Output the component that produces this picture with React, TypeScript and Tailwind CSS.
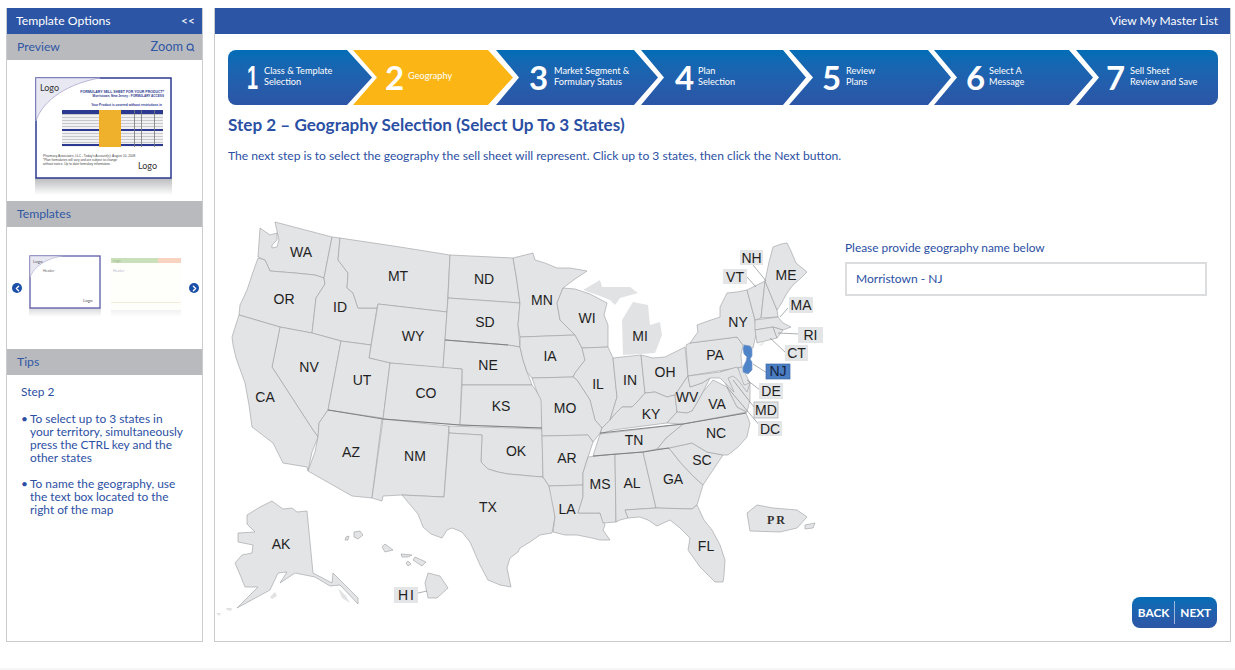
import { ChevronLeft, ChevronRight, Search } from 'lucide-react';

const steps = [
  { n: '1', l1: 'Class & Template', l2: 'Selection', cls: 'w-[144px] pl-[19px] rounded-l-lg [clip-path:polygon(0_0,119px_0,100%_50%,119px_100%,0_100%)]', numW: "w-[17px] inline-block origin-left scale-x-[0.6] font-['Liberation_Sans',Arial,sans-serif]" },
  { n: '2', l1: 'Geography', l2: '', cls: 'w-[160px] ml-[-19px] pl-[32px] [clip-path:polygon(0_0,135px_0,100%_50%,135px_100%,0_100%,24px_50%)]', numW: 'w-[23px]', active: true },
  { n: '3', l1: 'Market Segment &', l2: 'Formulary Status', cls: 'w-[162px] ml-[-17px] pl-[33px] [clip-path:polygon(0_0,138px_0,100%_50%,138px_100%,0_100%,23px_50%)]', numW: 'w-[25px]' },
  { n: '4', l1: 'Plan', l2: 'Selection', cls: 'w-[165px] ml-[-17px] pl-[34px] [clip-path:polygon(0_0,142px_0,100%_50%,142px_100%,0_100%,23px_50%)]', numW: 'w-[23px]' },
  { n: '5', l1: 'Review', l2: 'Plans', cls: 'w-[162px] ml-[-17px] pl-[33px] [clip-path:polygon(0_0,139px_0,100%_50%,139px_100%,0_100%,24px_50%)]', numW: 'w-[24px]' },
  { n: '6', l1: 'Select A', l2: 'Message', cls: 'w-[159px] ml-[-17px] pl-[32px] [clip-path:polygon(0_0,135px_0,100%_50%,135px_100%,0_100%,23px_50%)]', numW: 'w-[23px]' },
  { n: '7', l1: 'Sell Sheet', l2: 'Review and Save', cls: 'w-[142px] ml-[-17px] pl-[30px] rounded-r-lg [clip-path:polygon(0_0,100%_0,100%_100%,0_100%,23px_50%)]', numW: 'w-[24px]' },
];

const states = [
  // west
  '275,222 332,237 324,278 315,275 295,273 270,271 265,260 258,257 260,228 270,235 277,233 277,240 272,245 272,248 277,247 279,240',
  '258,258 265,260 270,271 295,273 315,275 324,278 325,284 316,298 312,333 280,327 239,315 240,305 247,290 253,272',
  '332,237 340,238 338,260 348,273 347,288 353,293 358,308 377,308 371,345 341,341 312,333 316,298 325,284 324,278',
  '340,238 400,247 450,255 447,312 378,304 377,308 358,308 353,293 347,288 348,273 338,260',
  '378,304 447,312 443,368 390,363 369,358',
  '450,255 513,258 516,275 520,303 448,298',
  '448,298 520,303 518,325 520,347 508,345 445,340',
  '445,340 508,345 520,347 523,360 527,372 532,385 462,385 462,369 443,368',
  '280,327 312,333 341,341 328,410 319,423 318,437 313,430 272,367',
  '239,315 280,327 272,367 313,430 318,437 312,452 308,471 307,467 283,463 273,443 252,427 249,405 245,383 236,358 233,345 232,337',
  '341,341 371,345 369,358 390,363 383,419 328,410',
  '390,363 462,369 460,425 383,419',
  '328,410 382,418 372,498 352,496 308,471 315,452 318,437 319,423',
  '383,419 449,426 444,497 402,495 383,496 382,501 372,498',
  '462,385 532,385 537,392 542,400 542,428 460,425',
  '449,426 542,429 543,477 530,476 520,475 508,474 498,472 488,469 481,462 482,435 449,433',
  '449,433 482,435 481,462 488,469 498,472 508,474 520,475 530,476 543,477 549,486 553,500 555,517 552,533 540,535 530,542 520,548 518,552 510,558 507,568 511,587 500,585 488,580 480,565 470,542 462,532 452,528 447,530 442,538 431,534 423,527 418,514 402,495 444,497',
  // midwest
  '513,258 533,253 535,260 545,263 557,268 570,268 587,271 575,279 563,288 557,303 560,320 568,328 575,335 520,337 518,325 520,303 516,275',
  '520,337 575,335 582,348 585,360 575,373 573,377 532,378 527,372 523,360 520,347',
  '563,288 575,289 590,294 607,303 604,315 608,325 608,347 582,348 575,335 568,328 560,320 557,303',
  '582,348 608,347 613,358 615,378 617,397 610,420 602,428 595,420 590,400 577,380 573,377 575,373 585,360',
  '613,358 641,355 645,393 639,400 632,407 622,407 615,414 610,420 617,397 615,378',
  '641,355 653,358 665,357 685,347 688,376 675,395 667,397 655,392 645,393',
  '532,378 573,377 577,380 590,400 595,420 602,428 600,433 593,442 588,435 542,436 541,400 537,392',
  '542,436 588,435 593,442 588,457 583,473 583,485 549,486 543,477',
  '549,486 583,485 583,497 578,513 600,513 605,525 603,530 610,540 600,540 592,538 577,535 565,535 553,532 555,517',
  // south
  '588,457 615,454 616,522 603,523 600,513 578,513 583,497 583,473',
  '615,454 643,452 656,508 625,510 628,518 620,520 616,522',
  '643,452 657,449 669,448 680,462 693,476 703,485 697,505 692,509 656,508',
  '625,510 656,508 692,509 697,505 704,520 712,530 720,545 725,560 724,575 723,582 715,582 700,567 688,550 690,538 680,528 670,520 657,526 648,520 640,517 628,518',
  '669,448 692,443 707,452 723,455 713,470 703,485 693,476 680,462',
  '657,449 666,438 683,424 746,413 750,423 747,437 738,447 728,455 723,455 707,452 692,443 669,448',
  '593,456 600,434 683,424 666,438 657,449 643,452 615,454',
  '602,428 610,420 615,414 622,407 632,407 639,400 645,393 655,392 667,397 675,395 677,412 667,423 613,430 600,434',
  '675,395 688,376 690,387 702,383 710,378 703,392 697,403 692,411 687,413 677,412',
  '667,423 677,412 687,413 692,411 697,403 703,392 713,380 727,387 737,407 747,412 683,424',
  // north east
  '720,372 737,367 750,383 750,400 747,412 737,407 727,387',
  '686,345 690,343 737,337 743,345 741,355 742,367 688,376',
  '688,376 720,372 737,367 745,378 750,383 747,392 738,380 733,376 728,378 734,392 720,378 710,378 702,383 690,387',
  '738,368 742,367 750,383 744,385',
  '690,343 737,337 743,345 753,348 756,335 755,320 747,290 737,292 727,293 720,307 720,317 708,321 697,325 698,332',
  '747,290 765,281 761,318 755,320',
  '765,281 777,310 778,317 761,318',
  '765,281 769,262 773,247 781,244 787,243 791,251 796,263 807,272 800,279 793,285 787,293 781,304 777,310',
  '755,320 778,317 783,323 791,327 783,330 773,327 755,330',
  '755,330 773,327 777,338 757,343',
  '773,327 783,330 777,338',
  // alaska, PR
  '247,515 260,507 272,501 283,509 292,508 297,512 307,511 313,573 332,583 333,573 345,585 358,598 358,604 340,585 330,586 315,577 295,573 280,583 287,572 278,573 270,590 237,608 258,587 245,587 241,577 235,563 242,555 252,553 253,545 238,542 238,533 255,532 247,524',
  '747,513 757,505 773,508 797,510 807,517 797,528 780,532 750,531',
  '805,525 815,523 813,528 805,529',
  // hawaii
  '428,573 440,576 448,588 437,598 428,598 425,583',
  '415,557 426,562 422,566 413,560',
  '385,544 393,550 385,552 382,547',
  '401,554 412,555 408,557 402,557',
  '408,561 411,564 408,566 406,563',
  '354,532 360,531 363,535 358,539 354,537',
  '346,537 349,536 348,540 345,540',
];

// no outline on these in the picture
const smudges = [
  '623,355 622,320 633,302 648,305 650,325 660,322 662,335 655,353 641,354',
  '583,290 600,280 602,287 630,287 638,293 620,298 615,305 610,300 600,296',
  '270,597 275,592 277,596 272,599', '338,588 346,596 350,603 342,598', '226,608 232,608 231,611 227,610', '216,613 221,613 219,616',
];

const darkLines = [
  '328,410 383,419 460,425 542,428',
  '600,433 683,424 746,413',
  '593,456 643,452 669,448',
  '445,340 508,345',
];

const leaders = [
  [753, 265, 766, 281], [747, 277, 756, 287], [788, 308, 780, 317], [800, 334, 778, 333],
  [785, 352, 770, 338], [767, 373, 753, 364], [760, 390, 747, 380], [754, 407, 733, 380],
  [761, 427, 727, 387], [418, 593, 427, 591],
];

const labels: [string, number, number][] = [
  ['WA', 301, 252], ['OR', 284, 299], ['ID', 340, 307], ['MT', 398, 276], ['WY', 413, 336], ['ND', 484, 279],
  ['SD', 485, 322], ['NE', 488, 365], ['NV', 309, 367], ['UT', 362, 380], ['CO', 426, 393], ['CA', 265, 397],
  ['AZ', 351, 452], ['NM', 415, 456], ['KS', 501, 406], ['OK', 516, 451], ['TX', 488, 507], ['MN', 542, 300],
  ['IA', 550, 356], ['WI', 587, 318], ['IL', 598, 384], ['MI', 640, 336], ['IN', 630, 380], ['OH', 665, 372],
  ['PA', 715, 355], ['NY', 738, 322], ['ME', 786, 275], ['KY', 651, 414], ['WV', 687, 397], ['VA', 717, 404],
  ['TN', 634, 440], ['NC', 716, 433], ['SC', 702, 460], ['GA', 673, 479], ['AL', 632, 483], ['MS', 600, 484],
  ['AR', 567, 458], ['LA', 567, 509], ['MO', 565, 408], ['FL', 706, 546], ['AK', 281, 544],
];

const boxed: [string, number, number, number, number][] = [
  ['NH', 740, 250, 23, 15], ['VT', 723, 269, 24, 15], ['MA', 789, 297, 24, 16], ['RI', 798, 327, 25, 16],
  ['CT', 785, 345, 23, 16], ['DE', 759, 383, 24, 16], ['MD', 754, 402, 24, 16], ['DC', 758, 421, 24, 15],
];

function UsaMap() {
  return (
    <svg viewBox="215 215 620 410" className="w-[620px] h-[410px] shrink-0 font-['Liberation_Sans',Arial,sans-serif]">
      {states.map((p, i) => (
        <polygon key={i} points={p} fill="#e3e4e6" stroke="#9a9c9f" strokeWidth="0.6" strokeLinejoin="round" />
      ))}
      {smudges.map((p, i) => (
        <polygon key={i} points={p} fill="#e1e2e4" />
      ))}
      {darkLines.map((p, i) => (
        <polyline key={i} points={p} fill="none" stroke="#77797c" strokeWidth="0.9" />
      ))}
      <polygon points="744,345 750,346 752,349 752,356 750,359 752,362 752,370 748,374 743,372 743,367 746,361 747,357 744,354 743,349" fill="#4f84c8" stroke="#7a9ccc" strokeWidth="0.7" />
      <polygon points="758,345 766,341 762,346" fill="#eceded" />
      {leaders.map(([x1, y1, x2, y2], i) => (
        <line key={i} x1={x1} y1={y1} x2={x2} y2={y2} stroke="#8b8d90" strokeWidth="0.7" />
      ))}
      {labels.map(([t, x, y]) => (
        <text key={t} x={x} y={y + 5} textAnchor="middle" fontSize="14" fill="#1f1f1f">{t}</text>
      ))}
      {boxed.map(([t, x, y, w, h]) => (
        <g key={t}>
          <rect x={x} y={y} width={w} height={h} fill="#e4e5e6" stroke={t === 'MD' ? '#a5a7aa' : 'none'} strokeWidth="0.7" />
          <text x={x + w / 2} y={y + h / 2 + 5} textAnchor="middle" fontSize="14" fill="#1f1f1f">{t}</text>
        </g>
      ))}
      <rect x="766" y="364" width="24" height="15" fill="#4a7dc2" stroke="#3b6aab" strokeWidth="0.7" />
      <text x="778" y="376" textAnchor="middle" fontSize="14" fill="#14233c">NJ</text>
      <rect x="394" y="587" width="24" height="16" fill="#e4e5e6" />
      <text x="407" y="600" textAnchor="middle" fontSize="14" letterSpacing="2" fill="#1f1f1f">HI</text>
      <text x="777" y="524" textAnchor="middle" fontSize="12" letterSpacing="2" fontFamily="'Liberation Serif',serif" fontWeight="700" fill="#333">PR</text>
    </svg>
  );
}

function PreviewThumb() {
  return (
    <svg viewBox="0 0 137 118" className="w-[137px] h-[118px] font-['Liberation_Sans',Arial,sans-serif]">
      <defs>
        <linearGradient id="refl" x1="0" y1="0" x2="0" y2="1">
          <stop offset="0" stopColor="#b9babd" />
          <stop offset="1" stopColor="#ffffff" />
        </linearGradient>
      </defs>
      <rect x="0" y="101" width="137" height="17" fill="url(#refl)" />
      <rect x="1" y="1" width="135" height="100" fill="#fff" stroke="#2b3990" strokeWidth="1.5" />
      <path d="M1 1 H65 C35 6 8 22 1 44 Z" fill="#e8e8f2" stroke="#a9a7cf" strokeWidth="0.8" />
      <text x="5" y="14" fontSize="9" fontFamily="Lato, sans-serif" fill="#333">Logo</text>
      <text x="129" y="16" textAnchor="end" fontSize="3.5" fontWeight="700" fill="#2b3990">FORMULARY SELL SHEET FOR YOUR PRODUCT*</text>
      <text x="129" y="20" textAnchor="end" fontSize="3.1" fontWeight="700" fill="#2b3990">Morristown, New Jersey : FORMULARY ACCESS</text>
      <text x="127" y="29" textAnchor="end" fontSize="3.2" fontWeight="700" fill="#2b3990">Your Product is covered without restrictions in</text>
      <rect x="27" y="33" width="101" height="37" fill="#f1f1f3" />
      {[37, 40, 43, 46, 49, 56, 59, 62, 65].map((y) => (
        <rect key={y} x="27" y={y} width="101" height="0.7" fill="#b5b6ba" />
      ))}
      <rect x="64" y="33" width="22" height="37" fill="#efb02c" />
      <rect x="27" y="33" width="37" height="4" fill="#2b3990" />
      <rect x="86" y="33" width="42" height="4" fill="#2b3990" />
      <rect x="27" y="52" width="37" height="2" fill="#2b3990" />
      <rect x="86" y="52" width="42" height="2" fill="#2b3990" />
      <rect x="27" y="67" width="37" height="2" fill="#2b3990" />
      <rect x="86" y="67" width="42" height="2" fill="#2b3990" />
      {[99, 106, 119].map((x) => (
        <rect key={x} x={x} y="33" width="0.8" height="37" fill="#77787c" />
      ))}
      <text x="8" y="80" fontSize="3.2" fill="#444">Pharmacy Associates, LLC - Today&apos;s Account(s): August 10, 2008</text>
      <text x="8" y="84" fontSize="3.2" fill="#444">*Plan formularies will vary and are subject to change</text>
      <text x="8" y="88" fontSize="3.2" fill="#444">without notice. Up to date formulary information.</text>
      <text x="103" y="92" fontSize="9" fontFamily="Lato, sans-serif" fill="#333">Logo</text>
    </svg>
  );
}

function TemplateThumbs() {
  return (
    <svg viewBox="0 0 154 66" className="w-[154px] h-[66px] font-['Lato',sans-serif]">
      <defs>
        <linearGradient id="refl2" x1="0" y1="0" x2="0" y2="1">
          <stop offset="0" stopColor="#d8d9dc" />
          <stop offset="1" stopColor="#ffffff" />
        </linearGradient>
        <linearGradient id="refl3" x1="0" y1="0" x2="0" y2="1">
          <stop offset="0" stopColor="#f1f1f2" />
          <stop offset="1" stopColor="#ffffff" />
        </linearGradient>
      </defs>
      <rect x="0" y="53" width="72" height="9" fill="url(#refl2)" />
      <rect x="1" y="1" width="70" height="52" fill="#fff" stroke="#5a5aa6" strokeWidth="1.3" />
      <path d="M1 1 H34 C18 3 4 12 1 23 Z" fill="#e8e8f2" stroke="#a9a7cf" strokeWidth="0.6" />
      <text x="4" y="8" fontSize="4.5" fill="#555">Logo</text>
      <text x="14" y="17" fontSize="3.5" fill="#666">Header</text>
      <text x="54" y="47" fontSize="4.5" fill="#555">Logo</text>
      <rect x="82" y="3" width="47" height="5" fill="#c9e0bb" />
      <rect x="129" y="3" width="23" height="5" fill="#f8d4c0" />
      <text x="84" y="7" fontSize="3.5" fill="#9bb58c">Logo</text>
      <rect x="82" y="8" width="70" height="47" fill="#fefefb" />
      <text x="84" y="17" fontSize="3.5" fill="#bdbdd4">Header</text>
      <rect x="82" y="47" width="70" height="1" fill="#f5ecd8" />
      <rect x="82" y="55" width="70" height="7" fill="url(#refl3)" />
    </svg>
  );
}

function Band({ children }: { children: React.ReactNode }) {
  return (
    <div className="h-[26px] bg-[#b9babd] flex items-center justify-between pl-[10px] pr-[7px] text-[12.2px] text-[#2f57a6]">{children}</div>
  );
}

function Arrow({ dir }: { dir: 'left' | 'right' }) {
  return (
    <div className="w-[10px] h-[10px] rounded-full bg-[#1c4fa8] flex items-center justify-center shrink-0">
      {dir === 'left' ? <ChevronLeft size={9} color="#fff" strokeWidth={3.5} /> : <ChevronRight size={9} color="#fff" strokeWidth={3.5} />}
    </div>
  );
}

export default function App() {
  return (
    <div className="w-[1235px] h-[670px] bg-white overflow-hidden flex flex-col font-['Lato',sans-serif]">
      <div className="flex gap-[11px] pt-[8px] pl-[6px] h-[642px]">
        {/* Sidebar */}
        <aside className="w-[197px] border-x border-b border-[#c9cbce] flex flex-col">
          <div className="h-[26px] bg-[#2c55a6] text-white flex items-center justify-between pl-[9px] pr-[7px] text-[12.2px]">
            <span>Template Options</span>
            <span className="text-[12px]">&lt;&lt;</span>
          </div>
          <Band>
            <span>Preview</span>
            <span className="flex items-center gap-[3px] text-[12.8px]">Zoom <Search size={9} strokeWidth={3} /></span>
          </Band>
          <div className="h-[141px] pt-[17px] pl-[28px]"><PreviewThumb /></div>
          <Band><span>Templates</span></Band>
          <div className="h-[122px] flex items-center justify-between pl-[5px] pr-[3px]">
            <Arrow dir="left" />
            <TemplateThumbs />
            <Arrow dir="right" />
          </div>
          <Band><span>Tips</span></Band>
          <div className="pt-[10px] pl-[14px] text-[11.9px] leading-[13px] text-[#2c4fa3]">
            <p className="mb-[14px]">Step 2</p>
            <div className="flex gap-[3px] mb-[13px]">
              <span className="w-[6px] shrink-0">•</span>
              <p className="whitespace-nowrap">To select up to 3 states in<br />your territory, simultaneously<br />press the CTRL key and the<br />other states</p>
            </div>
            <div className="flex gap-[3px]">
              <span className="w-[6px] shrink-0">•</span>
              <p className="whitespace-nowrap">To name the geography, use<br />the text box located to the<br />right of the map</p>
            </div>
          </div>
        </aside>

        {/* Main */}
        <main className="w-[1017px] border-x border-b border-[#c9cbce] flex flex-col">
          <div className="h-[26px] bg-[#2c55a6] text-white flex items-center justify-end pr-[12px] text-[12px] shrink-0">View My Master List</div>
          <div className="flex mt-[16px] ml-[13px] w-[990px] h-[55px]">
            {steps.map((s) => (
              <div
                key={s.n}
                className={`${s.cls} h-[55px] shrink-0 flex items-center text-white ${s.active ? 'bg-[#fbb616]' : 'bg-gradient-to-b from-[#006db6] to-[#2c55a6]'}`}
              >
                <span className={`${s.numW} text-[33px] font-bold leading-none`}>{s.n}</span>
                <span className="mb-[3px] text-[9.2px] leading-[11.5px] whitespace-nowrap">
                  {s.l1}
                  {s.l2 && <br />}
                  {s.l2}
                </span>
              </div>
            ))}
          </div>
          <h1 className="mt-[10px] ml-[13px] text-[17.1px] leading-[20px] font-bold text-[#2b4fa3]">Step 2 – Geography Selection (Select Up To 3 States)</h1>
          <p className="mt-[13px] ml-[13px] text-[12.1px] leading-[16px] text-[#2b4fa3]">
            The next step is to select the geography the sell sheet will represent. Click up to 3 states, then click the Next button.
          </p>
          <div className="flex mt-[51px]">
            <UsaMap />
            <div className="ml-[10px] w-[372px] h-[413px] flex flex-col">
              <label className="mt-[25px] text-[11.9px] leading-[16px] text-[#2b4fa3]">Please provide geography name below</label>
              <div className="mt-[6px] w-[362px] h-[34px] border-2 border-[#dcddde] flex items-center pl-[9px] text-[12px] text-[#2b4fa3]">Morristown - NJ</div>
              <div className="mt-auto ml-auto w-[85px] h-[31px] rounded-lg bg-gradient-to-b from-[#006db6] to-[#2c55a6] flex items-center justify-center text-white text-[11.8px] font-bold">
                <span>BACK</span>
                <span className="w-px h-[23px] bg-[#9db8dd] mx-[5px]" />
                <span>NEXT</span>
              </div>
            </div>
          </div>
        </main>
      </div>
      <div className="mt-auto h-[2px] bg-[#f6f6f6]" />
    </div>
  );
}
